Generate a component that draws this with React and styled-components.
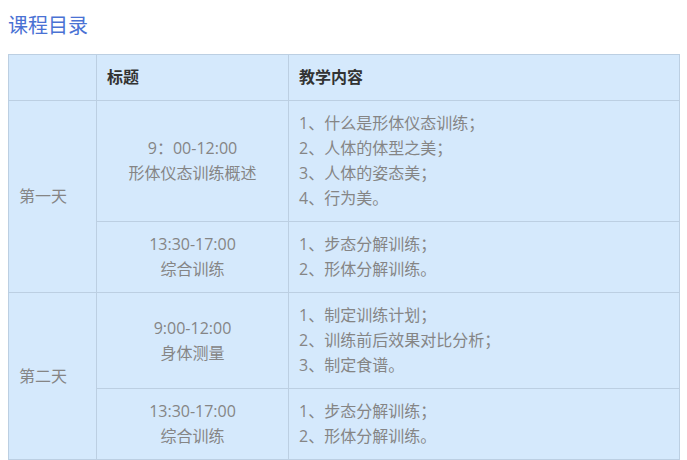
import React from 'react';
import styled, { createGlobalStyle } from 'styled-components';

const GlobalStyle = createGlobalStyle`
  body {
    margin: 0;
    background: #ffffff;
    font-family: "Open Sans", "Noto Sans CJK SC", sans-serif;
  }
`;

const Page = styled.div`
  padding: 11px 8px 0 8px;
`;

const Title = styled.h3`
  margin: 0 0 14px 0;
  font-size: 20px;
  line-height: 29px;
  font-weight: normal;
  color: #4a72d4;
`;

const Table = styled.table`
  width: 672px;
  border-collapse: collapse;
  table-layout: fixed;
  background: #d5e9fc;
  font-size: 16px;
  line-height: 25px;
`;

const Th = styled.th`
  border: 1px solid #bccfe2;
  padding: 10px 10px;
  text-align: left;
  font-weight: bold;
  color: #333333;
`;

const Td = styled.td`
  border: 1px solid #bccfe2;
  padding: 10px ${(p) => (p.$center ? '10px' : '10px')};
  text-align: ${(p) => (p.$center ? 'center' : 'left')};
  vertical-align: middle;
  color: #858585;
`;

const Line = styled.div``;

const schedule = [
  {
    day: '第一天',
    slots: [
      {
        time: '9：00-12:00',
        title: '形体仪态训练概述',
        items: ['1、什么是形体仪态训练；', '2、人体的体型之美；', '3、人体的姿态美；', '4、行为美。'],
      },
      {
        time: '13:30-17:00',
        title: '综合训练',
        items: ['1、步态分解训练；', '2、形体分解训练。'],
      },
    ],
  },
  {
    day: '第二天',
    slots: [
      {
        time: '9:00-12:00',
        title: '身体测量',
        items: ['1、制定训练计划；', '2、训练前后效果对比分析；', '3、制定食谱。'],
      },
      {
        time: '13:30-17:00',
        title: '综合训练',
        items: ['1、步态分解训练；', '2、形体分解训练。'],
      },
    ],
  },
];

export default function App() {
  return (
    <Page>
      <GlobalStyle />
      <Title>课程目录</Title>
      <Table>
        <colgroup>
          <col style={{ width: 88 }} />
          <col style={{ width: 192 }} />
          <col />
        </colgroup>
        <thead>
          <tr>
            <Th></Th>
            <Th>标题</Th>
            <Th>教学内容</Th>
          </tr>
        </thead>
        <tbody>
          {schedule.map((d) =>
            d.slots.map((s, i) => (
              <tr key={d.day + i}>
                {i === 0 && <Td rowSpan={d.slots.length}>{d.day}</Td>}
                <Td $center>
                  <Line>{s.time}</Line>
                  <Line>{s.title}</Line>
                </Td>
                <Td>
                  {s.items.map((it) => (
                    <Line key={it}>{it}</Line>
                  ))}
                </Td>
              </tr>
            ))
          )}
        </tbody>
      </Table>
    </Page>
  );
}
